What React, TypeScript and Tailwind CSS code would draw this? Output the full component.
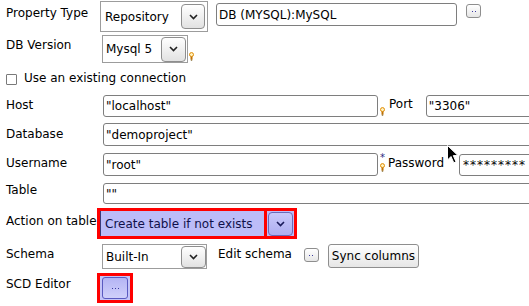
import React from "react";

const Chevron = ({ color = "#222" }: { color?: string }) => (
  <svg width="9" height="6" viewBox="0 0 9 6">
    <polyline points="1,1 4.5,4.5 8,1" fill="none" stroke={color} strokeWidth="1.6" />
  </svg>
);

const Bulb = () => (
  <svg width="5" height="9" viewBox="0 0 5 9">
    <circle cx="2.5" cy="2.6" r="2" fill="#fff3c0" stroke="#e08a00" strokeWidth="1" />
    <rect x="1.5" y="4.6" width="2" height="3" fill="#c07000" />
    <rect x="1.8" y="7.6" width="1.4" height="1" fill="#6a4a00" />
  </svg>
);

const DropBtn = ({ w = 24, h = 25 }: { w?: number; h?: number }) => (
  <div
    className="flex items-center justify-center rounded-[4px] border border-[#8e8e8e] bg-gradient-to-b from-white to-[#e2e2e2]"
    style={{ width: w, height: h }}
  >
    <Chevron />
  </div>
);

const Dots = () => (
  <div className="flex gap-[2px]">
    <div className="h-[1px] w-[1px] bg-[#3a3aa0]" />
    <div className="h-[1px] w-[1px] bg-[#3a3aa0]" />
  </div>
);

const SmallBtn = () => (
  <div className="flex h-[14px] w-[15px] items-center justify-center rounded-[3px] border border-[#8e8e8e] bg-gradient-to-b from-white to-[#e6e6e6]">
    <Dots />
  </div>
);

const Field = ({ text, w, h, mt, wide }: { text: string; w: number; h: number; mt: number; wide?: boolean }) => (
  <div
    className={
      wide
        ? "flex shrink-0 items-center rounded-[3px] border border-[#7e7e7e] bg-white pl-[3px] whitespace-nowrap tracking-[1px]"
        : "flex shrink-0 items-center rounded-[3px] border border-[#7e7e7e] bg-white pl-[2px] whitespace-nowrap"
    }
    style={{ width: w, height: h, marginTop: mt }}
  >
    {text}
  </div>
);

const Label = ({ text, pt }: { text: string; pt: number }) => (
  <div className="w-[97px] shrink-0 whitespace-nowrap pl-[6px]" style={{ paddingTop: pt }}>
    {text}
  </div>
);

export default function App() {
  return (
    <div className="relative h-[306px] w-[529px] overflow-hidden bg-white font-['DejaVu_Sans',sans-serif] text-[12px] leading-[14px] text-black">
      {/* Property Type */}
      <div className="flex h-[34px]">
        <Label text="Property Type" pt={6} />
        <div className="ml-[3px] mt-[1px] flex h-[31px] w-[108px] shrink-0 items-center justify-between border border-[#9c9c9c] bg-white pl-[4px] pr-[2px]">
          <span>Repository</span>
          <DropBtn w={24} h={25} />
        </div>
        <div className="ml-[8px]">
          <Field text="DB (MYSQL):MySQL" w={241} h={23} mt={3} />
        </div>
        <div className="ml-[9px] mt-[4px]">
          <SmallBtn />
        </div>
      </div>

      {/* DB Version */}
      <div className="flex h-[32px]">
        <Label text="DB Version" pt={4} />
        <div className="ml-[5px] mt-[1px] flex h-[28px] w-[86px] items-center justify-between border border-[#9c9c9c] bg-white pl-[3px] pr-[1px]">
          <span>Mysql 5</span>
          <DropBtn w={25} h={25} />
        </div>
        <div className="ml-[1px] mt-[18px]">
          <Bulb />
        </div>
      </div>

      {/* Checkbox */}
      <div className="flex h-[26px] pl-[6px]">
        <div className="mt-[8px] h-[11px] w-[11px] rounded-[1px] border border-[#7a7a7a] bg-white" />
        <div className="ml-[7px] pt-[5px] whitespace-nowrap">Use an existing connection</div>
      </div>

      {/* Host */}
      <div className="flex h-[28px]">
        <Label text="Host" pt={6} />
        <div className="ml-[6px]">
          <Field text={'"localhost"'} w={275} h={22} mt={3} />
        </div>
        <div className="ml-[2px] mt-[15px]">
          <Bulb />
        </div>
        <div className="ml-[4px] pt-[5px]">Port</div>
        <div className="ml-[13px]">
          <Field text={'"3306"'} w={140} h={22} mt={3} />
        </div>
      </div>

      {/* Database */}
      <div className="flex h-[30px]">
        <Label text="Database" pt={7} />
        <div className="ml-[6px]">
          <Field text={'"demoproject"'} w={460} h={23} mt={3} />
        </div>
      </div>

      {/* Username */}
      <div className="flex h-[30px]">
        <Label text="Username" pt={6} />
        <div className="ml-[6px]">
          <Field text={'"root"'} w={275} h={23} mt={3} />
        </div>
        <div className="ml-[2px] flex w-[6px] flex-col items-center">
          <div className="mt-[3px] h-[10px] text-[10px] leading-[10px] text-[#2a2a80]">*</div>
          <div className="mt-[0px]">
            <Bulb />
          </div>
        </div>
        <div className="ml-[3px] pt-[6px]">Password</div>
        <div className="ml-[15px]">
          <Field text="*********" w={100} h={22} mt={4} wide />
        </div>
      </div>

      {/* Table */}
      <div className="flex h-[26px]">
        <Label text="Table" pt={3} />
        <div className="ml-[6px]">
          <Field text={'""'} w={460} h={21} mt={3} />
        </div>
      </div>

      {/* Action on table */}
      <div className="flex h-[35px]">
        <Label text="Action on table" pt={8} />
        <div className="mt-[2px] flex h-[31px] w-[200px] border-[3px] border-[#ff0000] bg-[#bcbcf8]">
          <div className="flex flex-1 items-center border-l border-[#3a3a7a] pl-[4px] pt-[1px] whitespace-nowrap text-[#10104a]">
            Create table if not exists
          </div>
          <div className="h-full w-[3px] bg-[#ff0000]" />
          <div className="mx-[1px] flex h-[24px] w-[25px] items-center justify-center self-center rounded-[4px] border border-[#6a6ab8] bg-gradient-to-b from-[#c8c8fa] to-[#aeaef0]">
            <Chevron color="#1a1a5a" />
          </div>
        </div>
      </div>

      {/* Schema */}
      <div className="flex h-[30px]">
        <Label text="Schema" pt={6} />
        <div className="ml-[5px] mt-[3px] flex h-[25px] w-[105px] items-center justify-between border border-[#9c9c9c] bg-white pl-[3px] pr-[0px]">
          <span>Built-In</span>
          <DropBtn w={25} h={22} />
        </div>
        <div className="ml-[11px] pt-[6px] whitespace-nowrap">Edit schema</div>
        <div className="ml-[12px] mt-[7px]">
          <SmallBtn />
        </div>
        <div className="ml-[9px] mt-[3px] flex h-[24px] w-[91px] items-center justify-center rounded-[3px] border border-[#8e8e8e] bg-gradient-to-b from-white to-[#e6e6e6] whitespace-nowrap">
          Sync columns
        </div>
      </div>

      {/* SCD Editor */}
      <div className="flex h-[35px]">
        <Label text="SCD Editor" pt={6} />
        <div className="mt-[2px] flex h-[30px] w-[36px] items-center justify-center border-[3px] border-[#ff0000] bg-[#c4c4f8]">
          <div className="flex h-[22px] w-[26px] items-center justify-center rounded-[3px] border border-[#5a5ac0] bg-gradient-to-b from-[#b4b4f4] to-[#d0d0fa]">
            <div className="flex gap-[2px]">
              <div className="h-[1px] w-[1px] bg-[#3a3aa0]" />
              <div className="h-[1px] w-[1px] bg-[#3a3aa0]" />
              <div className="h-[1px] w-[1px] bg-[#3a3aa0]" />
            </div>
          </div>
        </div>
      </div>

      {/* Mouse cursor */}
      <svg className="absolute left-[447px] top-[145px]" width="13" height="19" viewBox="0 0 13 19">
        <path d="M0.5 0.5 L0.5 15 L4 11.5 L6.8 17.8 L9 16.8 L6.3 10.6 L11 10.6 Z" fill="#000" stroke="#fff" strokeWidth="1" />
      </svg>
    </div>
  );
}
